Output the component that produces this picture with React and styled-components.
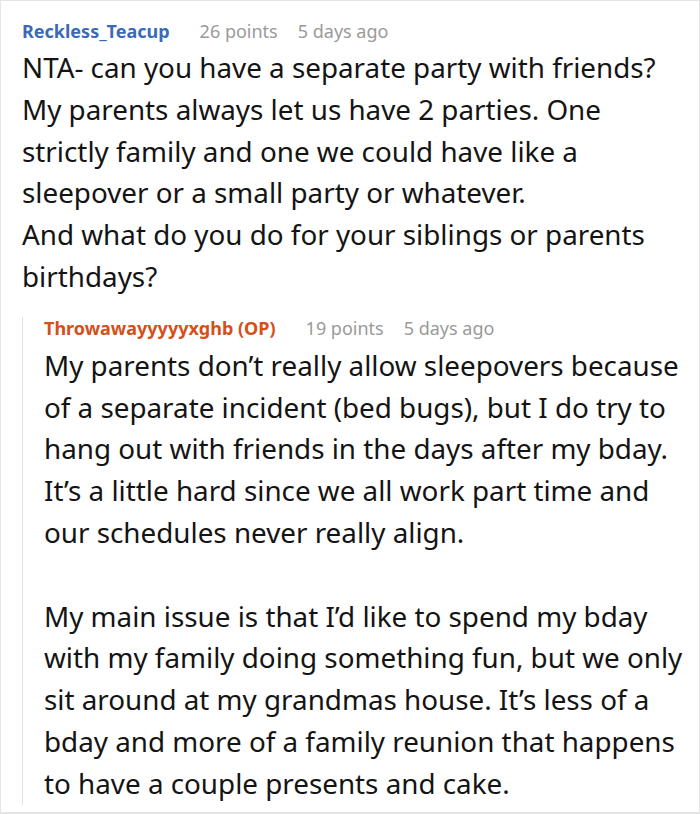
import React from "react";
import styled, { createGlobalStyle } from "styled-components";

const GlobalStyle = createGlobalStyle`
  html, body {
    margin: 0;
    padding: 0;
    background: #ffffff;
  }
  body {
    font-family: "Noto Sans", "Open Sans", sans-serif;
  }
`;

const Card = styled.div`
  box-sizing: border-box;
  width: 700px;
  height: 814px;
  border: 1px solid #e4e4e4;
  border-bottom-width: 2px;
  background: #fff;
  padding: 19px 12px 0 21px;
  overflow: hidden;
`;

const Comment = styled.div`
  display: flex;
  flex-direction: column;
`;

const Reply = styled.div`
  display: flex;
  flex-direction: column;
  margin-top: 19px;
  border-left: 1px solid #e2e2e2;
  padding-left: 21px;
`;

const Header = styled.div`
  display: flex;
  align-items: baseline;
  gap: 20px;
  font-size: 18px;
  line-height: 22px;
`;

const Author = styled.span`
  font-weight: 700;
  margin-right: 10px;
  color: ${(p) => (p.$op ? "#d4501a" : "#3a6ab8")};
`;

const Meta = styled.span`
  color: #9a9a9a;
`;

const Body = styled.div`
  margin-top: ${(p) => (p.$reply ? "6px" : "5px")};
  font-size: 27.8px;
  line-height: 41.8px;
  color: #141414;
`;

const Para = styled.p`
  margin: 0 0 41.8px;
  &:last-child {
    margin-bottom: 0;
  }
`;

export default function App() {
  return (
    <>
      <GlobalStyle />
      <Card>
        <Comment>
          <Header>
            <Author>Reckless_Teacup</Author>
            <Meta>26 points</Meta>
            <Meta>5 days ago</Meta>
          </Header>
          <Body>
            <Para>
              NTA- can you have a separate party with friends? My parents always let us have 2
              parties. One strictly family and one we could have like a sleepover or a small party or
              whatever.
              <br />
              And what do you do for your siblings or parents birthdays?
            </Para>
          </Body>
        </Comment>
        <Reply>
          <Header>
            <Author $op>Throwawayyyyyxghb (OP)</Author>
            <Meta>19 points</Meta>
            <Meta>5 days ago</Meta>
          </Header>
          <Body $reply>
            <Para>
              My parents don’t really allow sleepovers because of a separate incident (bed bugs), but I
              do try to hang out with friends in the days after my bday. It’s a little hard since we all
              work part time and our schedules never really align.
            </Para>
            <Para>
              My main issue is that I’d like to spend my bday with my family doing something fun, but
              we only sit around at my grandmas house. It’s less of a bday and more of a family reunion
              that happens to have a couple presents and cake.
            </Para>
          </Body>
        </Reply>
      </Card>
    </>
  );
}
